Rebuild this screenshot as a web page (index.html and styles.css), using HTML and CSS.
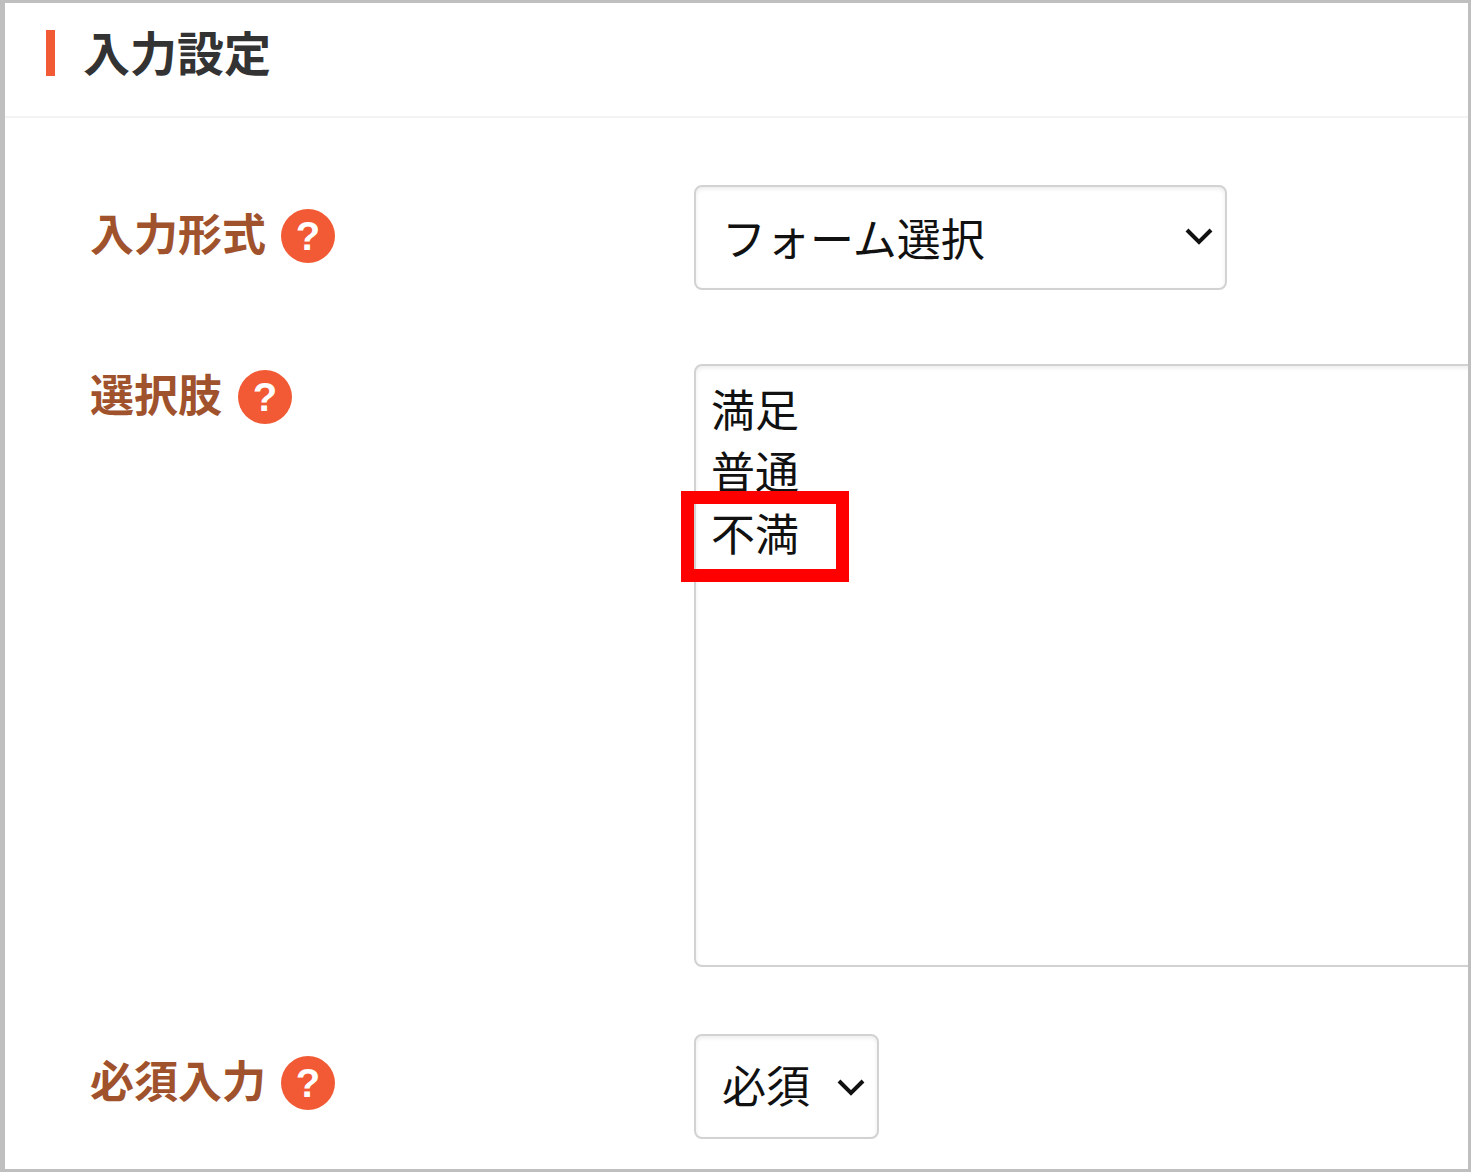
FILE: index.html
```html
<!DOCTYPE html>
<html lang="ja">

<head>
    <meta charset="UTF-8">
    <meta name="viewport" content="width=device-width, initial-scale=1.0">
    <title>入力設定</title>
    <link rel="stylesheet" href="styles.css">
</head>

<body>
    <div class="panel">
        <div class="panel-head">
            <span class="head-bar"></span>
            <h2 class="head-title">入力設定</h2>
        </div>
        <div class="form">
            <div class="form-row">
                <div class="label">
                    <span class="label-text">入力形式</span>
                    <span class="help">?</span>
                </div>
                <div class="select select-type">
                    <span class="select-text">フォーム選択</span>
                    <svg class="chevron" viewBox="0 0 30 20"><path d="M3 4 L15 16 L27 4" /></svg>
                </div>
            </div>
            <div class="form-row">
                <div class="label">
                    <span class="label-text">選択肢</span>
                    <span class="help">?</span>
                </div>
                <div class="textarea">
                    <div>満足</div>
                    <div>普通</div>
                    <div>不満</div>
                </div>
            </div>
            <div class="form-row">
                <div class="label label-last">
                    <span class="label-text">必須入力</span>
                    <span class="help">?</span>
                </div>
                <div class="select select-required">
                    <span class="select-text">必須</span>
                    <svg class="chevron" viewBox="0 0 30 20"><path d="M3 4 L15 16 L27 4" /></svg>
                </div>
            </div>
        </div>
        <div class="highlight"></div>
    </div>
</body>

</html>
```

FILE: styles.css
```css
* {
    box-sizing: border-box;
}

html,
body {
    margin: 0;
    padding: 0;
    background: #fff;
}

body {
    font-family: "Noto Sans CJK JP", "Noto Sans", sans-serif;
}

.panel {
    position: relative;
    width: 1471px;
    height: 1172px;
    border: 3px solid #bfbfbf;
    border-left-width: 5px;
    overflow: hidden;
    background: #fff;
}

.panel-head {
    display: flex;
    align-items: center;
    height: 115px;
    padding: 0 0 13px 41px;
    border-bottom: 2px solid #f3f3f3;
}

.head-bar {
    width: 9px;
    height: 46px;
    background: #f15a34;
}

.head-title {
    margin: 0 0 5px 28px;
    font-size: 47px;
    font-weight: 700;
    line-height: 1;
    color: #333;
}

.form {
    padding: 67px 0 0 85px;
}

.form-row {
    display: flex;
    align-items: flex-start;
    margin-bottom: 74px;
}

.form-row:nth-child(2) {
    margin-bottom: 67px;
}

.label {
    display: flex;
    align-items: center;
    gap: 15px;
    flex-shrink: 0;
    width: 604px;
    height: 56px;
    margin-top: 23px;
    font-size: 44px;
    font-weight: 700;
    color: #a0522d;
}

.label-text {
    position: relative;
    top: -4px;
}

.form-row:nth-child(2) .label {
    margin-top: 5px;
    gap: 16px;
}

.label-last {
    margin-top: 21px;
}

.help {
    display: flex;
    align-items: center;
    justify-content: center;
    width: 54px;
    height: 54px;
    border-radius: 50%;
    background: #f15a34;
    color: #fff;
    font-family: "Liberation Sans", sans-serif;
    font-size: 40px;
    font-weight: 700;
    line-height: 1;
}

.select {
    display: flex;
    align-items: center;
    justify-content: space-between;
    flex-shrink: 0;
    height: 105px;
    border: 2px solid #d2d2d2;
    border-radius: 8px;
    box-shadow: inset 0 2px 4px rgba(0, 0, 0, 0.08);
    font-size: 44px;
    color: #111;
}

.select-type {
    width: 533px;
    padding: 0 11px 2px 26px;
}

.select-required {
    width: 185px;
    padding: 0 11px 6px 26px;
}

.chevron {
    width: 30px;
    height: 20px;
}

.select-type .chevron {
    margin-bottom: 2px;
}

.select-required .chevron {
    margin-top: 6px;
}

.chevron path {
    fill: none;
    stroke: #111;
    stroke-width: 4;
}

.textarea {
    flex-shrink: 0;
    width: 800px;
    height: 603px;
    padding: 11px 15px;
    border: 2px solid #d2d2d2;
    border-radius: 8px;
    box-shadow: inset 0 2px 4px rgba(0, 0, 0, 0.08);
    font-size: 44px;
    line-height: 62px;
    color: #111;
}

.highlight {
    position: absolute;
    left: 676px;
    top: 488px;
    width: 168px;
    height: 91px;
    border: 13px solid #ff0000;
}
```
